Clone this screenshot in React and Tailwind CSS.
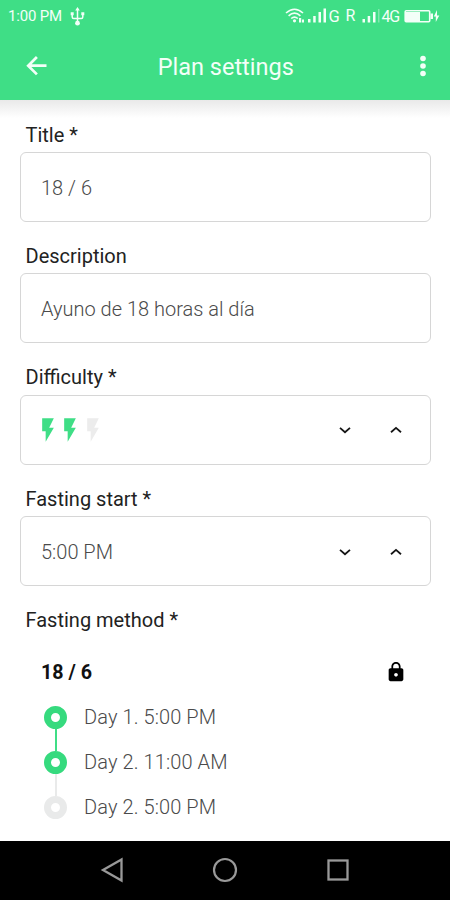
import { MdFlashOn, MdLock } from 'react-icons/md';

const steps = [
  { label: 'Day 1. 5:00 PM', done: true },
  { label: 'Day 2. 11:00 AM', done: true },
  { label: 'Day 2. 5:00 PM', done: false },
];

const Chevron = ({ up }) => (
  <svg width="12" height="8" viewBox="0 0 12 8" fill="none" stroke="#151515" strokeWidth="1.8">
    <path d={up ? 'M1 6.2 6 1.9l5 4.3' : 'M1 1.9l5 4.3 5-4.3'} />
  </svg>
);

const Stepper = () => (
  <div className="flex items-center gap-[38.5px]">
    <button className="flex"><Chevron /></button>
    <button className="flex"><Chevron up /></button>
  </div>
);

const Field = ({ label, children }) => (
  <div className="h-[121.4px]">
    <label className="flex h-8 items-center pl-[5.5px] pb-[3px] text-[20px] text-[#222]">{label}</label>
    <div className="flex h-[70px] items-center justify-between rounded-[6px] border border-[#d6d6d6] pl-5 pr-[28.5px] pt-px text-[20px] font-light text-[#4a4a4a]">
      {children}
    </div>
  </div>
);

const StatusBar = () => (
  <div className="flex h-8 items-center justify-between pl-[8px] pr-[10px]">
    <div className="flex items-center gap-[8px]">
      <span className="text-[15px] tracking-[-0.2px]">1:00 PM</span>
      <svg width="15" height="19" viewBox="0 0 15 19" fill="currentColor">
        <path d="M7.500 2v13M2.200 6v4q0 1.500 1.500 1.500h7.600q1.500 0 1.500-1.500V6" fill="none" stroke="currentColor" strokeWidth="1.500" />
        <path d="M7.500 0l2.300 3.500H5.200zM0.700 5.200h3v3h-3zM11.300 5.200h3v3h-3z" />
        <circle cx="7.500" cy="16.200" r="2.400" />
      </svg>
    </div>
    <svg width="155" height="20" viewBox="0 0 155 20" fill="currentColor">
      {/* wifi */}
      <g fill="none" stroke="currentColor" strokeWidth="1.6">
        <path d="M1 7Q9.500 -0.500 18 7" />
        <path d="M3.600 9.800Q9.500 4.500 15.400 9.800" />
        <path d="M6.200 12.500Q9.500 9.700 12.800 12.500" />
      </g>
      <circle cx="9.500" cy="14.800" r="1.600" />
      <path d="M14 12h2.200v4.500H14zM17 13.500h2v3h-2z" />
      {/* sim 1 */}
      <path d="M23 13h2.500v3.500H23zM28.200 10h2.500v6.500h-2.500zM33.500 6H36v10.500h-2.500zM38.500 2.500H41v14h-2.500z" />
      <text x="43.500" y="15.800" fontSize="16.500">G</text>
      <text x="60.500" y="15.300" fontSize="16">R</text>
      {/* sim 2 */}
      <path d="M77.500 13H80v3.500h-2.500zM82.700 10h2.500v6.500h-2.500zM88 6h2.500v10.500H88z" />
      <path d="M93 3h1.500v13.500H93z" opacity="0.350" />
      <text x="96.500" y="15.800" fontSize="16" letterSpacing="-1.200">4G</text>
      {/* battery */}
      <rect x="120.200" y="4.800" width="24.500" height="11" rx="1" fill="none" stroke="currentColor" strokeWidth="1.600" />
      <path d="M121 6h14v9h-14zM145.500 7.500h2.500v5.500h-2.500zM152 4l-3.200 6.500h2v5.500l3.500-6.500H152z" />
    </svg>
  </div>
);

export default function App() {
  return (
    <div className="flex h-[900px] w-[450px] flex-col overflow-hidden bg-white font-['Roboto',sans-serif] select-none">
      <header className="h-[100px] shrink-0 bg-[#3fde86] text-[#f3fff8]">
        <StatusBar />
        <div className="flex h-[68px] items-center justify-between pl-[20.5px] pr-[19px]">
          <svg width="30" height="30" viewBox="0 0 30 30" fill="none" stroke="currentColor" strokeWidth="2.700">
            <path d="M25.500 14.700H7.500M15.900 6 7.200 14.700l8.700 8.700" />
          </svg>
          <h1 className="pt-[3px] pr-[14px] text-[23.5px] leading-none">Plan settings</h1>
          <svg width="16" height="24" viewBox="0 0 16 24" fill="currentColor">
            <circle cx="8" cy="4.5" r="2.800" />
            <circle cx="8" cy="12" r="2.800" />
            <circle cx="8" cy="19.500" r="2.800" />
          </svg>
        </div>
      </header>
      <div className="h-[18px] shrink-0 bg-linear-to-b from-[#e9e9e9] to-white" />

      <main className="flex-1 pl-5 pr-[19px] pt-[2px]">
        <Field label="Title *">18 / 6</Field>
        <Field label="Description">Ayuno de 18 horas al día</Field>
        <Field label="Difficulty *">
          <div className="-ml-[7.5px] flex">
            <MdFlashOn size={28} className="-mr-[5.5px] text-[#3fde86]" />
            <MdFlashOn size={28} className="-mr-[5.5px] text-[#3fde86]" />
            <MdFlashOn size={28} className="text-[#ececec]" />
          </div>
          <Stepper />
        </Field>
        <Field label="Fasting start *">
          5:00 PM
          <Stepper />
        </Field>

        <h2 className="flex h-8 items-center pb-[3px] pl-[5.5px] text-[20px] text-[#222]">Fasting method *</h2>
        <div className="mt-[18px] flex h-8 items-center justify-between pl-[21px] pr-6">
          <span className="pt-[2px] text-[19.7px] font-bold text-[#111]">18 / 6</span>
          <MdLock size={22} />
        </div>
        <ul className="mt-[7px] pl-6">
          {steps.map((step, i) => (
            <li key={i} className="flex h-[45px] items-center gap-[17px]">
              <div className="flex h-full flex-col items-center">
                <span className={i === 0 ? 'w-[2px] flex-1' : step.done ? 'w-[2px] flex-1 bg-[#3fde86]' : 'w-[2px] flex-1 bg-[#e9eaea]'} />
                <span className={`size-[23px] rounded-full border-[7.5px] ${step.done ? 'border-[#36da7e]' : 'border-[#e9eaea]'}`} />
                <span className={i === 2 ? 'w-[2px] flex-1' : steps[i + 1].done ? 'w-[2px] flex-1 bg-[#3fde86]' : 'w-[2px] flex-1 bg-[#e9eaea]'} />
              </div>
              <span className="text-[20px] font-light tracking-[0.1px] text-[#4a4a4a]">{step.label}</span>
            </li>
          ))}
        </ul>
      </main>

      <nav className="flex h-[59.5px] shrink-0 items-center justify-center gap-[88px] bg-black">
        <svg width="24" height="28" viewBox="0 0 24 28" fill="none" stroke="#999" strokeWidth="2.300">
          <path d="M21.500 3.500v21L3 14z" />
        </svg>
        <svg width="26" height="26" viewBox="0 0 26 26" fill="none" stroke="#999" strokeWidth="2.200">
          <circle cx="13" cy="13" r="11" />
        </svg>
        <svg width="24" height="24" viewBox="0 0 24 24" fill="none" stroke="#999" strokeWidth="2.300">
          <rect x="2.500" y="2.500" width="19" height="19" />
        </svg>
      </nav>
    </div>
  );
}
